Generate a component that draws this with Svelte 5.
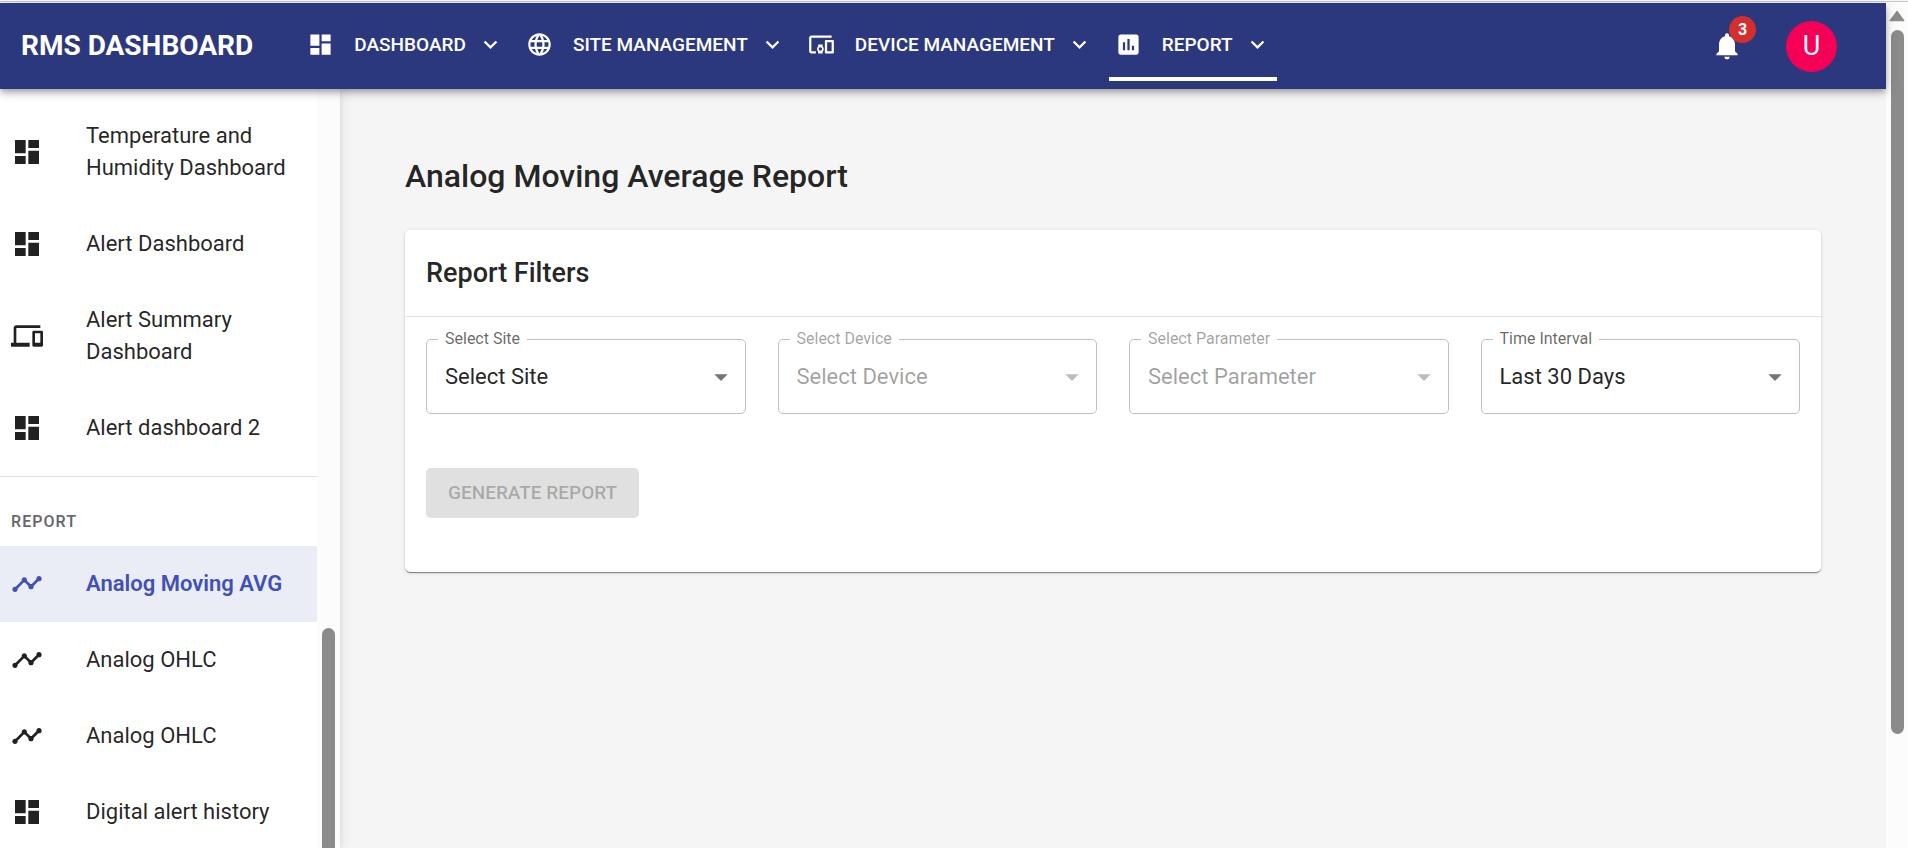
<script lang="ts">
  const icons = {
    dashboard: 'M3 13h8V3H3v10zm0 8h8v-6H3v6zm10 0h8V11h-8v10zm0-18v6h8V3h-8z',
    globe:
      'M11.99 2C6.47 2 2 6.48 2 12s4.47 10 9.99 10C17.52 22 22 17.52 22 12S17.52 2 11.99 2zm6.93 6h-2.95c-.32-1.25-.78-2.45-1.38-3.56 1.84.63 3.37 1.91 4.33 3.56zM12 4.04c.83 1.2 1.48 2.53 1.91 3.96h-3.82c.43-1.43 1.08-2.76 1.91-3.96zM4.26 14C4.1 13.36 4 12.69 4 12s.1-1.36.26-2h3.38c-.08.66-.14 1.32-.14 2 0 .68.06 1.34.14 2H4.26zm.82 2h2.95c.32 1.25.78 2.45 1.38 3.56-1.84-.63-3.37-1.9-4.33-3.56zm2.95-8H5.08c.96-1.66 2.49-2.93 4.33-3.56C8.81 5.55 8.35 6.75 8.03 8zM12 19.96c-.83-1.2-1.48-2.53-1.91-3.96h3.82c-.43 1.43-1.08 2.76-1.91 3.96zM14.34 14H9.66c-.09-.66-.16-1.32-.16-2 0-.68.07-1.35.16-2h4.68c.09.65.16 1.32.16 2 0 .68-.07 1.34-.16 2zm.25 5.56c.6-1.11 1.06-2.31 1.38-3.56h2.95c-.96 1.65-2.49 2.93-4.33 3.56zM16.36 14c.08-.66.14-1.32.14-2 0-.68-.06-1.34-.14-2h3.38c.16.64.26 1.31.26 2s-.1 1.36-.26 2h-3.38z',
    devicesOther:
      'M3 6h18V4H3c-1.1 0-2 .9-2 2v12c0 1.1.9 2 2 2h4v-2H3V6zm10 6H9v1.78c-.61.55-1 1.33-1 2.22s.39 1.67 1 2.22V20h4v-1.78c.61-.55 1-1.34 1-2.22s-.39-1.67-1-2.22V12zm-2 5.5c-.83 0-1.5-.67-1.5-1.5s.67-1.5 1.5-1.5 1.5.67 1.5 1.5-.67 1.5-1.5 1.5zM22 8h-6c-.5 0-1 .5-1 1v10c0 .5.5 1 1 1h6c.5 0 1-.5 1-1V9c0-.5-.5-1-1-1zm-1 10h-4v-8h4v8z',
    assessment:
      'M19 3H5c-1.1 0-2 .9-2 2v14c0 1.1.9 2 2 2h14c1.1 0 2-.9 2-2V5c0-1.1-.9-2-2-2zM9 17H7v-7h2v7zm4 0h-2V7h2v10zm4 0h-2v-4h2v4z',
    devices:
      'M4 6h18V4H4c-1.1 0-2 .9-2 2v11H0v3h14v-3H4V6zm19 2h-6c-.55 0-1 .45-1 1v10c0 .55.45 1 1 1h6c.55 0 1-.45 1-1V9c0-.55-.45-1-1-1zm-1 9h-4v-7h4v7z',
    timeline:
      'M23 8c0 1.1-.9 2-2 2-.18 0-.35-.02-.51-.07l-3.56 3.55c.05.16.07.34.07.52 0 1.1-.9 2-2 2s-2-.9-2-2c0-.18.02-.36.07-.52l-2.55-2.55c-.16.05-.34.07-.52.07s-.36-.02-.52-.07l-4.55 4.56c.05.16.07.33.07.51 0 1.1-.9 2-2 2s-2-.9-2-2 .9-2 2-2c.18 0 .35.02.51.07l4.56-4.55C8.02 9.36 8 9.18 8 9c0-1.1.9-2 2-2s2 .9 2 2c0 .18-.02.36-.07.52l2.55 2.55c.16-.05.34-.07.52-.07s.36.02.52.07l3.55-3.56C19.02 8.35 19 8.18 19 8c0-1.1.9-2 2-2s2 .9 2 2z',
    expand: 'M16.59 8.59L12 13.17 7.41 8.59 6 10l6 6 6-6z',
    dropDown: 'M7 10l5 5 5-5z',
    bell: 'M12 22c1.1 0 2-.9 2-2h-4c0 1.1.89 2 2 2zm6-6v-5c0-3.07-1.64-5.64-4.5-6.32V4c0-.83-.67-1.5-1.5-1.5s-1.5.67-1.5 1.5v.68C7.63 5.36 6 7.92 6 11v5l-2 2v1h16v-1l-2-2z'
  };

  type IconName = keyof typeof icons;

  const menus: { label: string; icon: IconName; active?: boolean }[] = [
    { label: 'Dashboard', icon: 'dashboard' },
    { label: 'Site Management', icon: 'globe' },
    { label: 'Device Management', icon: 'devicesOther' },
    { label: 'Report', icon: 'assessment', active: true }
  ];

  const dashboardLinks: { label: string; icon: IconName }[] = [
    { label: 'Temperature and Humidity Dashboard', icon: 'dashboard' },
    { label: 'Alert Dashboard', icon: 'dashboard' },
    { label: 'Alert Summary Dashboard', icon: 'devices' },
    { label: 'Alert dashboard 2', icon: 'dashboard' }
  ];

  const reportLinks: { label: string; icon: IconName; active?: boolean }[] = [
    { label: 'Analog Moving AVG', icon: 'timeline', active: true },
    { label: 'Analog OHLC', icon: 'timeline' },
    { label: 'Analog OHLC', icon: 'timeline' },
    { label: 'Digital alert history', icon: 'dashboard' }
  ];

  const filters = [
    { id: 'site', label: 'Select Site', value: 'Select Site', disabled: false },
    { id: 'device', label: 'Select Device', value: 'Select Device', disabled: true },
    { id: 'parameter', label: 'Select Parameter', value: 'Select Parameter', disabled: true },
    { id: 'interval', label: 'Time Interval', value: 'Last 30 Days', disabled: false }
  ];
</script>

{#snippet icon(name: IconName)}
  <svg class="icon" viewBox="0 0 24 24" aria-hidden="true"><path d={icons[name]} /></svg>
{/snippet}

{#snippet navLink(item: { label: string; icon: IconName; active?: boolean })}
  <li>
    <a class="side-link" class:active={item.active} href="#report">
      {@render icon(item.icon)}
      <span>{item.label}</span>
    </a>
  </li>
{/snippet}

<div class="window">
  <div class="page">
    <header class="app-bar">
      <div class="brand">RMS DASHBOARD</div>
      <nav class="menus" aria-label="Main">
        {#each menus as menu}
          <button class="menu" class:active={menu.active}>
            {@render icon(menu.icon)}
            <span class="menu-label">{menu.label}</span>
            {@render icon('expand')}
          </button>
        {/each}
      </nav>
      <button class="alerts" aria-label="Notifications">
        {@render icon('bell')}
        <span class="badge">3</span>
      </button>
      <button class="avatar" aria-label="Account">U</button>
    </header>

    <div class="body">
      <aside class="sidebar">
        <nav class="side-nav" aria-label="Pages">
          <ul class="dashboards">
            {#each dashboardLinks as link}
              {@render navLink(link)}
            {/each}
          </ul>
          <h2 class="side-heading">Report</h2>
          <ul>
            {#each reportLinks as link}
              {@render navLink(link)}
            {/each}
          </ul>
        </nav>
        <div class="scroll-track side-track"><div class="thumb"></div></div>
      </aside>

      <main class="content">
        <h1>Analog Moving Average Report</h1>
        <section class="card">
          <h2 class="card-title">Report Filters</h2>
          <form class="card-body">
            <div class="filters">
              {#each filters as filter}
                <div class="field" class:disabled={filter.disabled}>
                  <label for={filter.id}>{filter.label}</label>
                  <select id={filter.id} disabled={filter.disabled}>
                    <option>{filter.value}</option>
                  </select>
                  {@render icon('dropDown')}
                </div>
              {/each}
            </div>
            <button class="generate" type="button" disabled>Generate Report</button>
          </form>
        </section>
      </main>
    </div>
  </div>

  <div class="scroll-track page-track">
    <svg class="arrow" viewBox="0 0 14 10" aria-hidden="true">
      <path d="M7 1 L13 9 H1 Z" />
    </svg>
    <div class="thumb"></div>
  </div>
</div>

<style>
  :global(body) {
    margin: 0;
    font-family: Roboto, 'Liberation Sans', sans-serif;
    color: rgba(0, 0, 0, 0.87);
    background: #f5f5f5;
  }

  .window {
    display: flex;
    box-sizing: border-box;
    height: 100vh;
    overflow: hidden;
    border-top: 1px solid #f5f5f5;
  }

  .page {
    flex: 1;
    min-width: 0;
    display: flex;
    flex-direction: column;
    border-top: 1px solid #c8c8c8;
  }

  button {
    border: none;
    padding: 0;
    font-family: inherit;
    background: none;
    color: inherit;
    cursor: pointer;
  }

  ul {
    list-style: none;
    margin: 0;
    padding: 0;
  }

  .icon {
    flex: none;
    width: 32px;
    height: 32px;
    fill: currentColor;
  }

  /* top bar */
  .app-bar {
    z-index: 2;
    display: flex;
    align-items: center;
    height: 86px;
    flex: none;
    margin-top: 1px;
    padding: 0 49px 0 21px;
    box-sizing: border-box;
    background: #2c387e;
    color: white;
    box-shadow:
      0 3px 5px -1px rgba(0, 0, 0, 0.2),
      0 5px 7px rgba(0, 0, 0, 0.14),
      0 1px 14px rgba(0, 0, 0, 0.12);
  }

  .brand {
    font-size: 28px;
    line-height: 44px;
    font-weight: 700;
    white-space: nowrap;
  }

  .menus {
    flex: 1;
    display: flex;
    gap: 10px;
    margin-left: 48px;
  }

  .menu {
    display: flex;
    align-items: center;
    height: 70px;
    box-sizing: border-box;
    padding: 0 6px;
    border-bottom: 4px solid transparent;
    font-size: 19px;
    font-weight: 500;
    text-transform: uppercase;
    white-space: nowrap;
  }

  .menu.active {
    border-bottom-color: white;
  }

  .menu .icon {
    width: 27px;
    height: 27px;
  }

  .menu-label {
    margin: 0 11px 0 20px;
  }

  .alerts {
    position: relative;
    display: flex;
    margin-right: 43px;
  }

  .badge {
    position: absolute;
    top: -14px;
    left: 18px;
    width: 27px;
    border-radius: 14px;
    background: #d32f2f;
    font-size: 16px;
    line-height: 27px;
    font-weight: 700;
  }

  .avatar {
    width: 51px;
    height: 51px;
    border-radius: 50%;
    background: #f50057;
    font-size: 27px;
  }

  /* side navigation */
  .body {
    flex: 1;
    min-height: 0;
    display: flex;
  }

  .sidebar {
    z-index: 1;
    flex: none;
    display: flex;
    width: 340px;
    background: white;
    box-shadow:
      0 3px 5px -1px rgba(0, 0, 0, 0.1),
      0 1px 14px rgba(0, 0, 0, 0.1);
  }

  .side-nav {
    flex: 1;
    padding-top: 9px;
    overflow: hidden;
  }

  .dashboards {
    padding-bottom: 10px;
    border-bottom: 1px solid #e0e0e0;
  }

  .side-link {
    display: flex;
    align-items: center;
    gap: 43px;
    padding: 22px 22px 22px 11px;
    font-size: 22px;
    line-height: 32px;
    color: inherit;
    text-decoration: none;
  }

  .side-link.active {
    background: #eaecf6;
    color: #3f51b5;
    font-weight: 600;
  }

  .side-heading {
    margin: 0;
    padding: 33px 11px 12px;
    font-size: 16px;
    line-height: 24px;
    font-weight: 600;
    letter-spacing: 1px;
    text-transform: uppercase;
    color: rgba(0, 0, 0, 0.6);
  }

  /* report page */
  .content {
    flex: 1;
    min-width: 0;
    padding: 65px;
  }

  h1 {
    margin: 0 0 32px;
    font-size: 32px;
    line-height: 44px;
    font-weight: 500;
  }

  .card {
    border-radius: 5px;
    background: white;
    box-shadow:
      0 3px 1px -2px rgba(0, 0, 0, 0.2),
      0 1px 1px rgba(0, 0, 0, 0.3),
      0 1px 4px rgba(0, 0, 0, 0.12);
  }

  .card-title {
    margin: 0;
    padding: 22px 21px;
    border-bottom: 1px solid #e0e0e0;
    font-size: 27px;
    line-height: 42px;
    font-weight: 500;
  }

  .card-body {
    padding: 22px 21px 54px;
  }

  .filters {
    display: grid;
    grid-template-columns: repeat(4, 1fr);
    gap: 32px;
    margin-bottom: 54px;
  }

  .field {
    position: relative;
    display: flex;
    align-items: center;
  }

  .field label {
    position: absolute;
    top: -11px;
    left: 12px;
    padding: 0 7px;
    background: white;
    font-size: 16px;
    line-height: 22px;
    color: rgba(0, 0, 0, 0.6);
  }

  .field select {
    width: 100%;
    height: 75px;
    box-sizing: border-box;
    padding: 0 43px 0 18px;
    border: 1px solid #c0c0c0;
    border-radius: 5px;
    appearance: none;
    background: white;
    font-family: inherit;
    font-size: 22px;
    color: rgba(0, 0, 0, 0.87);
    opacity: 1;
  }

  .field .icon {
    position: absolute;
    right: 9px;
    color: rgba(0, 0, 0, 0.54);
    pointer-events: none;
  }

  .field.disabled label,
  .field.disabled select {
    color: rgba(0, 0, 0, 0.38);
  }

  .field.disabled .icon {
    color: rgba(0, 0, 0, 0.26);
  }

  .generate {
    height: 50px;
    padding: 0 22px 2px;
    border-radius: 5px;
    background: #e0e0e0;
    color: rgba(0, 0, 0, 0.26);
    font-size: 19px;
    font-weight: 500;
    text-transform: uppercase;
    cursor: default;
  }

  /* scroll bars */
  .scroll-track {
    flex: none;
    display: flex;
    flex-direction: column;
    align-items: center;
    background: #fcfcfc;
  }

  .thumb {
    width: 13px;
    border-radius: 7px;
    background: #8b8b8b;
  }

  .side-track {
    width: 23px;
    justify-content: flex-end;
  }

  .side-track .thumb {
    height: 29%;
    border-radius: 7px 7px 0 0;
  }

  .page-track {
    width: 22px;
    padding-top: 8px;
    border-top: 1px solid #c8c8c8;
  }

  .page-track .thumb {
    height: 84%;
    margin-top: 8px;
  }

  .arrow {
    width: 16px;
    height: 12px;
    fill: #8b8b8b;
    stroke: #8b8b8b;
    stroke-width: 1;
    stroke-linejoin: round;
  }
</style>
